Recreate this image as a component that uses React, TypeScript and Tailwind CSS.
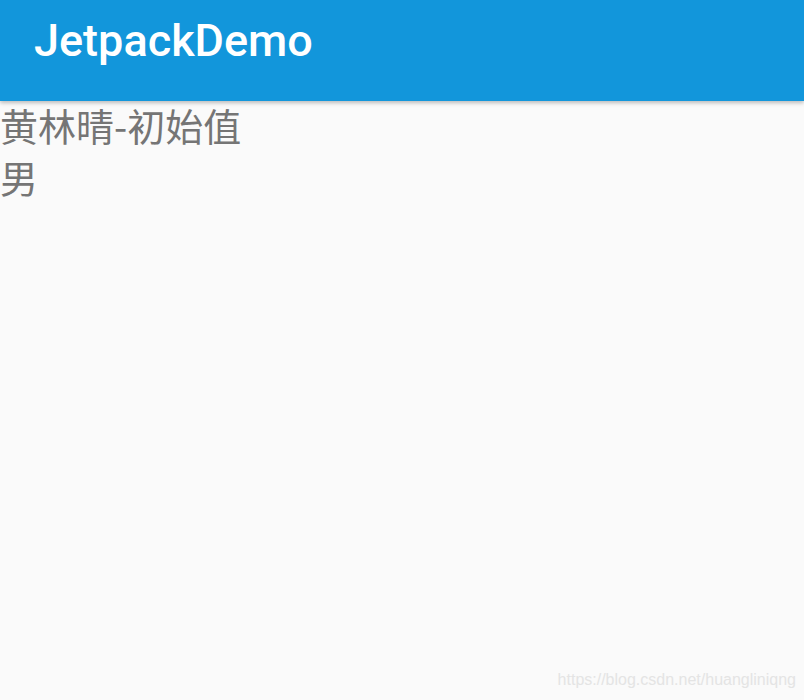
export default function App() {
  return (
    <div className="relative min-h-[700px] bg-[#fafafa] font-['Roboto','Noto_Sans_CJK_SC',sans-serif]">
      <div className="flex h-[101px] items-start bg-[#1296db] pl-[34px] pt-[18px] shadow-[0_2px_4px_rgba(0,0,0,0.25)]">
        <h1 className="text-[45px] font-medium leading-none text-white">JetpackDemo</h1>
      </div>
      <div className="-mt-[2px] font-['Noto_Sans_CJK_SC',sans-serif] text-[38px] leading-[52px] text-[#757575]">
        <p>黄林晴-初始值</p>
        <p>男</p>
      </div>
      <span className="absolute bottom-[8px] right-[8px] font-['Liberation_Sans',sans-serif] text-[16px] text-[#e4e4e4]">
        https://blog.csdn.net/huangliniqng
      </span>
    </div>
  );
}
